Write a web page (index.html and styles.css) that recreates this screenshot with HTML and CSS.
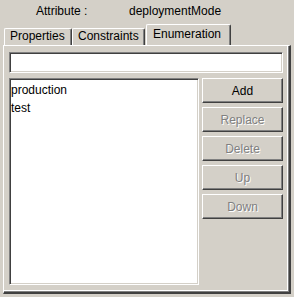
FILE: index.html
```html
<!DOCTYPE html>
<html lang="en">
<head>
    <meta charset="UTF-8">
    <title>Attribute Editor</title>
    <link rel="stylesheet" href="styles.css">
</head>
<body>
    <div class="attr-row">
        <span class="attr-label">Attribute :</span>
        <span class="attr-value">deploymentMode</span>
    </div>

    <div class="tabs">
        <div class="tab tab-properties">Properties</div>
        <div class="tab tab-constraints">Constraints</div>
        <div class="tab tab-enum active">Enumeration</div>
    </div>

    <div class="panel">
        <input type="text" class="field" id="enumValue">
        <div class="enum-body">
            <ul class="enum-list" id="enumList">
                <li>production</li>
                <li>test</li>
            </ul>
            <div class="buttons">
                <button class="btn">Add</button>
                <button class="btn" disabled>Replace</button>
                <button class="btn" disabled>Delete</button>
                <button class="btn" disabled>Up</button>
                <button class="btn" disabled>Down</button>
            </div>
        </div>
    </div>
</body>
</html>
```

FILE: styles.css
```css
body { margin: 0; background: #d4d0c8; font: 12px "Liberation Sans", Arial, sans-serif; color: #000; }

.attr-row { display: flex; box-sizing: border-box; height: 24px; padding: 4px 0 0 36px; line-height: 14px; }
.attr-label { width: 93px; }

/* tab strip */
.tabs { display: flex; align-items: flex-end; height: 21px; padding-left: 4px; }
.tab {
    box-sizing: border-box;
    height: 17px;
    padding-left: 5px;
    line-height: 14px;
    white-space: nowrap;
    border: 1px solid #fff;
    border-right-color: #404040;
    border-bottom: 0;
    border-radius: 2px 2px 0 0;
    box-shadow: inset -1px 0 #808080;
}
.tab-properties { width: 68px; }
.tab-constraints { width: 73px; }
.tab-enum { width: 85px; margin-left: 1px; padding-left: 6px; }
.tab.active { height: 21px; padding-top: 2px; }

/* tab page */
.panel {
    box-sizing: border-box;
    width: 288px;
    height: 249px;
    margin-left: 3px;
    padding: 6px 0 0 5px;
    border: 1px solid #fff;
    border-right: 2px solid #404040;
    border-bottom: 2px solid #404040;
    box-shadow: inset -1px -1px #808080, inset -2px -2px #fff;
}

.field, .enum-list {
    box-sizing: border-box;
    background: #fff;
    border: 1px solid;
    border-color: #808080 #fff #fff #808080;
    box-shadow: inset 1px 1px #404040, inset -1px -1px #d4d0c8;
}
.field { display: block; width: 274px; height: 21px; margin: 0; padding: 0 3px; font: inherit; outline: none; }

.enum-body { display: flex; gap: 3px; margin-top: 5px; }
.enum-list { width: 190px; height: 207px; margin: 0; padding: 2px 0 0 1px; list-style: none; line-height: 18px; }

.buttons { display: flex; flex-direction: column; gap: 4px; }
.btn {
    box-sizing: border-box;
    width: 81px;
    height: 25px;
    padding: 0;
    background: #d4d0c8;
    font: inherit;
    line-height: 14px;
    color: #000;
    border: 1px solid;
    border-color: #fff #404040 #404040 #fff;
    box-shadow: inset -1px -1px #808080;
}
.btn:disabled { color: #808080; text-shadow: 1px 1px #fff; }
```
